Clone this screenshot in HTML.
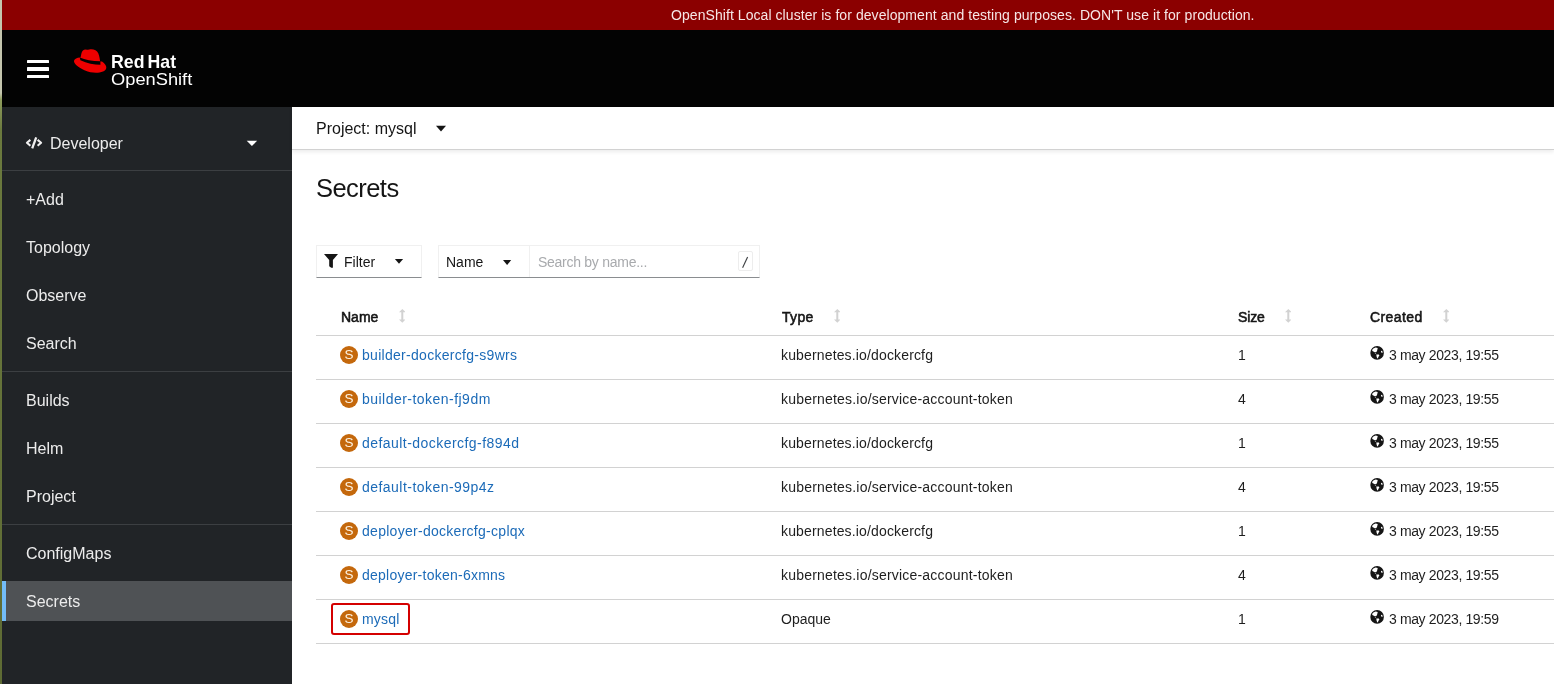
<!DOCTYPE html>
<html><head><meta charset="utf-8">
<style>
*{margin:0;padding:0;box-sizing:border-box}
html,body{width:1554px;height:684px;overflow:hidden;background:#fff;font-family:"Liberation Sans",sans-serif;position:relative}
.abs{position:absolute}
.t{position:absolute;white-space:nowrap;line-height:1;will-change:transform}
#strip{left:0;top:0;width:2px;height:684px;background:linear-gradient(#c4c6ae 0,#c4c6ae 93px,#8e9c5c 100px,#6b7a3e 130px,#5e6b34 684px)}
#strip2{display:none}
#banner{left:2px;top:0;width:1552px;height:30px;background:#8b0000}
#header{left:2px;top:30px;width:1552px;height:77px;background:#030303}
#sidebar{left:2px;top:107px;width:290px;height:577px;background:#212427}
.nav{color:#ececec;font-size:16px}
.dv{position:absolute;left:2px;width:290px;height:1px;background:#3c3f42}
#projbar{left:292px;top:107px;width:1262px;height:43px;background:#fff;border-bottom:1px solid #d2d2d2;box-shadow:0 2px 4px rgba(0,0,0,0.08)}
.hdr{font-size:14px;color:#151515;-webkit-text-stroke:0.55px #151515}
.lnk{color:#1c6bb8;font-size:14px}
.cell{color:#1e1e1e;font-size:14px}
.rl{position:absolute;left:316px;width:1238px;height:1px;background:#d2d2d2}
.sico{position:absolute;width:18px;height:18px;border-radius:50%;background:#c4680c;color:#fdf3e3;font-size:13.5px;line-height:18px;text-align:center;will-change:transform}
.globe{position:absolute;width:22px;height:22px}
.sort{position:absolute}

</style></head><body>
<svg width="0" height="0" style="position:absolute"><defs>
<g id="globe"><circle cx="11.1" cy="10.9" r="6.8" fill="#151515"/>
<path d="M6.1 8 L7.4 6.4 L9.6 5.6 L11.7 6 L11.4 7.4 L10.9 9.3 L10 10.3 L8.7 10.3 L7.4 9.6 L6.4 9 Z" fill="#fff"/>
<path d="M8.8 10.9 L10 10.9 L10.1 11.6 L9 11.6 Z" fill="#fff"/>
<path d="M10.3 12.4 L12.9 12.4 L13.2 13.5 L12.2 15.4 L11.3 16.7 L10.6 14.5 Z" fill="#fff"/>
<path d="M15 9 L16.1 8.7 L16.7 10.3 L16.1 11.1 L15.1 10.3 Z" fill="#fff"/>
</g>
<g id="sort"><path d="M3.3 0 L6.6 3.2 L4.3 3.2 L4.3 10.5 L6.6 10.5 L3.3 13.7 L0 10.5 L2.3 10.5 L2.3 3.2 L0 3.2 Z" fill="#d2d2d2"/></g>
</defs></svg>
<div id="strip" class="abs"></div>
<div id="strip2" class="abs"></div>
<div id="banner" class="abs"></div>
<div class="t" style="left:670.5px;top:8.15px;font-size:14px;letter-spacing:0.065px;color:#f6e6e6">OpenShift Local cluster is for development and testing purposes. DON'T use it for production.</div>
<div id="header" class="abs"></div>
<div class="abs" style="left:27.4px;top:59.6px;width:21.3px;height:3.5px;background:#fff;border-radius:0.6px"></div>
<div class="abs" style="left:27.4px;top:67.3px;width:21.3px;height:3.6px;background:#fff;border-radius:0.6px"></div>
<div class="abs" style="left:27.4px;top:74.9px;width:21.3px;height:3.4px;background:#fff;border-radius:0.6px"></div>
<svg class="abs" style="left:70px;top:45px" width="40" height="32" viewBox="0 0 40 32">
<path d="M10 12.6 C7 12.8 4.5 13.8 4 15.8 C3.6 18.5 8 22.5 15 25.5 C21 28 28 28.5 33 26.5 C36.5 25 37 22.5 35.5 20 C34.6 18.6 33.4 17.4 32 16.6 L30 16.4 Z" fill="#ee0000"/>
<path d="M10.2 14 L11.4 8.5 C12 5.5 13.5 4.4 15.5 4.4 C17 4.4 18 5 19.2 4.6 C21 4 23.5 4.2 25.5 5.3 C28 6.7 29 9.5 29.6 13 L30.3 17.5 Z" fill="#ee0000"/>
<path d="M9.8 12.4 C15 14.5 22 16 30.4 16.3 L30.4 19.7 C24 19.5 17 18.5 10.4 15.2 Z" fill="#030303"/>
</svg>
<div class="t" style="left:111.3px;top:53.5px;font-size:17.7px;letter-spacing:0.05px;word-spacing:-2px;font-weight:bold;color:#fff">Red Hat</div>
<div class="t" style="left:111.3px;top:71px;font-size:17px;transform:scaleX(1.075);transform-origin:0 0;color:#fff">OpenShift</div>

<div id="sidebar" class="abs"></div>
<svg class="abs" style="left:22px;top:133px" width="24" height="20" viewBox="0 0 24 20">
<polyline points="8.4,6.9 4.95,9.8 8.4,12.7" fill="none" stroke="#f0f0f0" stroke-width="2.1" stroke-linejoin="round"/>
<line x1="14.2" y1="4.4" x2="10.2" y2="15.3" stroke="#f0f0f0" stroke-width="2.3"/>
<polyline points="15.6,6.9 19.1,9.8 15.6,12.7" fill="none" stroke="#f0f0f0" stroke-width="2.1" stroke-linejoin="round"/>
</svg>
<div class="t nav" style="left:50.3px;top:136.2px">Developer</div>
<svg class="abs" style="left:246px;top:140px" width="12" height="7" viewBox="0 0 12 7"><path d="M0.7 0.8 L11.1 0.8 L5.9 6.1 Z" fill="#fff"/></svg>
<div class="t nav" style="left:26px;top:192.1px">+Add</div>
<div class="t nav" style="left:26px;top:239.5px">Topology</div>
<div class="t nav" style="left:26px;top:287.5px">Observe</div>
<div class="t nav" style="left:26px;top:335.5px">Search</div>
<div class="dv" style="top:170px"></div>
<div class="dv" style="top:371px"></div>
<div class="dv" style="top:524px"></div>
<div class="t nav" style="left:26px;top:392.5px">Builds</div>
<div class="t nav" style="left:26px;top:440.5px">Helm</div>
<div class="t nav" style="left:26px;top:488.5px">Project</div>
<div class="t nav" style="left:26px;top:545.5px">ConfigMaps</div>
<div class="abs" style="left:2px;top:581px;width:290px;height:40px;background:#4f5255"></div>
<div class="abs" style="left:2px;top:581px;width:4px;height:40px;background:#73bcf7"></div>
<div class="t nav" style="left:26px;top:593.5px">Secrets</div>

<div id="projbar" class="abs"></div>
<div class="t" style="left:316px;top:120.5px;font-size:16px;color:#151515">Project: mysql</div>
<svg class="abs" style="left:435px;top:125px" width="12" height="8" viewBox="0 0 12 8"><path d="M1 0.8 L11 0.8 L6 6.6 Z" fill="#151515"/></svg>
<div class="t" style="left:316px;top:176.1px;font-size:25.5px;letter-spacing:-0.55px;color:#151515">Secrets</div>

<!-- toolbar -->
<div class="abs" style="left:316px;top:245px;width:106px;height:33px;border:1px solid #f0f0f0;border-bottom-color:#8a8d90"></div>
<svg class="abs" style="left:320px;top:250px" width="22" height="22" viewBox="0 0 22 22"><path d="M4 4 L18 4 L12.9 10 L12.9 17.7 L11.2 17.7 L9.2 16.2 L9.2 10 Z" fill="#151515"/></svg>
<div class="t" style="left:343.6px;top:255.15px;font-size:14px;color:#151515">Filter</div>
<svg class="abs" style="left:394px;top:258px" width="10" height="7" viewBox="0 0 10 7"><path d="M0.9 1 L9.1 1 L5 5.8 Z" fill="#151515"/></svg>
<div class="abs" style="left:438px;top:245px;width:92px;height:33px;border:1px solid #f0f0f0;border-bottom-color:#8a8d90"></div>
<div class="t" style="left:446.3px;top:255.15px;font-size:14px;color:#151515">Name</div>
<svg class="abs" style="left:502px;top:259px" width="10" height="7" viewBox="0 0 10 7"><path d="M1 1 L9.2 1 L5.1 6 Z" fill="#151515"/></svg>
<div class="abs" style="left:529px;top:245px;width:231px;height:33px;border:1px solid #f0f0f0;border-left:none;border-bottom-color:#8a8d90"></div>
<div class="t" style="left:537.5px;top:255.15px;font-size:14px;color:#a8aaad;letter-spacing:-0.27px">Search by name...</div>
<div class="abs" style="left:737.5px;top:251px;width:15px;height:20px;border:1px solid #ededed;border-radius:2px"></div>
<svg class="abs" style="left:740px;top:255px" width="10" height="14" viewBox="0 0 10 14"><line x1="7.6" y1="2" x2="2.6" y2="12.8" stroke="#3c3f42" stroke-width="1.1"/></svg>

<!-- table -->
<div class="t hdr" style="left:340.5px;top:310.15px">Name</div>
<svg class="sort" style="left:398.7px;top:309px" viewBox="0 0 6.6 13.7" width="6.6" height="13.7"><use href="#sort"/></svg>
<div class="t hdr" style="left:781.5px;top:310.15px;letter-spacing:0.3px">Type</div>
<svg class="sort" style="left:833.7px;top:309px" viewBox="0 0 6.6 13.7" width="6.6" height="13.7"><use href="#sort"/></svg>
<div class="t hdr" style="left:1238px;top:310.15px;letter-spacing:-0.15px">Size</div>
<svg class="sort" style="left:1284.7px;top:309px" viewBox="0 0 6.6 13.7" width="6.6" height="13.7"><use href="#sort"/></svg>
<div class="t hdr" style="left:1370px;top:310.15px;letter-spacing:0.4px">Created</div>
<svg class="sort" style="left:1442.7px;top:309px" viewBox="0 0 6.6 13.7" width="6.6" height="13.7"><use href="#sort"/></svg>
<div class="rl" style="top:335px"></div>
<div class="rl" style="top:379px"></div>
<div class="rl" style="top:423px"></div>
<div class="rl" style="top:467px"></div>
<div class="rl" style="top:511px"></div>
<div class="rl" style="top:555px"></div>
<div class="rl" style="top:599px"></div>
<div class="rl" style="top:643px"></div>
<div class="abs" style="left:331px;top:603px;width:79px;height:32px;border:2px solid #d40000;border-radius:3px"></div>
<div class="sico" style="left:340.2px;top:346px">S</div>
<div class="t lnk" style="left:362.3px;top:348.15px;letter-spacing:0.29px">builder-dockercfg-s9wrs</div>
<div class="t cell" style="left:781.3px;top:348.15px;letter-spacing:0.15px">kubernetes.io/dockercfg</div>
<div class="t cell" style="left:1238px;top:348.15px">1</div>
<svg class="globe" style="left:1366px;top:342px" width="22" height="22" viewBox="0 0 22 22"><use href="#globe"/></svg>
<div class="t cell" style="left:1389.2px;top:348.15px;letter-spacing:-0.375px">3 may 2023, 19:55</div>
<div class="sico" style="left:340.2px;top:390px">S</div>
<div class="t lnk" style="left:362.3px;top:392.15px;letter-spacing:0.47px">builder-token-fj9dm</div>
<div class="t cell" style="left:781.3px;top:392.15px;letter-spacing:0.2px">kubernetes.io/service-account-token</div>
<div class="t cell" style="left:1238px;top:392.15px">4</div>
<svg class="globe" style="left:1366px;top:386px" width="22" height="22" viewBox="0 0 22 22"><use href="#globe"/></svg>
<div class="t cell" style="left:1389.2px;top:392.15px;letter-spacing:-0.375px">3 may 2023, 19:55</div>
<div class="sico" style="left:340.2px;top:434px">S</div>
<div class="t lnk" style="left:362.3px;top:436.15px;letter-spacing:0.45px">default-dockercfg-f894d</div>
<div class="t cell" style="left:781.3px;top:436.15px;letter-spacing:0.15px">kubernetes.io/dockercfg</div>
<div class="t cell" style="left:1238px;top:436.15px">1</div>
<svg class="globe" style="left:1366px;top:430px" width="22" height="22" viewBox="0 0 22 22"><use href="#globe"/></svg>
<div class="t cell" style="left:1389.2px;top:436.15px;letter-spacing:-0.375px">3 may 2023, 19:55</div>
<div class="sico" style="left:340.2px;top:478px">S</div>
<div class="t lnk" style="left:362.3px;top:480.15px;letter-spacing:0.46px">default-token-99p4z</div>
<div class="t cell" style="left:781.3px;top:480.15px;letter-spacing:0.2px">kubernetes.io/service-account-token</div>
<div class="t cell" style="left:1238px;top:480.15px">4</div>
<svg class="globe" style="left:1366px;top:474px" width="22" height="22" viewBox="0 0 22 22"><use href="#globe"/></svg>
<div class="t cell" style="left:1389.2px;top:480.15px;letter-spacing:-0.375px">3 may 2023, 19:55</div>
<div class="sico" style="left:340.2px;top:522px">S</div>
<div class="t lnk" style="left:362.3px;top:524.15px;letter-spacing:0.28px">deployer-dockercfg-cplqx</div>
<div class="t cell" style="left:781.3px;top:524.15px;letter-spacing:0.15px">kubernetes.io/dockercfg</div>
<div class="t cell" style="left:1238px;top:524.15px">1</div>
<svg class="globe" style="left:1366px;top:518px" width="22" height="22" viewBox="0 0 22 22"><use href="#globe"/></svg>
<div class="t cell" style="left:1389.2px;top:524.15px;letter-spacing:-0.375px">3 may 2023, 19:55</div>
<div class="sico" style="left:340.2px;top:566px">S</div>
<div class="t lnk" style="left:362.3px;top:568.15px;letter-spacing:0.24px">deployer-token-6xmns</div>
<div class="t cell" style="left:781.3px;top:568.15px;letter-spacing:0.2px">kubernetes.io/service-account-token</div>
<div class="t cell" style="left:1238px;top:568.15px">4</div>
<svg class="globe" style="left:1366px;top:562px" width="22" height="22" viewBox="0 0 22 22"><use href="#globe"/></svg>
<div class="t cell" style="left:1389.2px;top:568.15px;letter-spacing:-0.375px">3 may 2023, 19:55</div>
<div class="sico" style="left:340.2px;top:610px">S</div>
<div class="t lnk" style="left:362.3px;top:612.15px;letter-spacing:0.17px">mysql</div>
<div class="t cell" style="left:781.3px;top:612.15px;letter-spacing:0px">Opaque</div>
<div class="t cell" style="left:1238px;top:612.15px">1</div>
<svg class="globe" style="left:1366px;top:606px" width="22" height="22" viewBox="0 0 22 22"><use href="#globe"/></svg>
<div class="t cell" style="left:1389.2px;top:612.15px;letter-spacing:-0.375px">3 may 2023, 19:59</div>

</body></html>
